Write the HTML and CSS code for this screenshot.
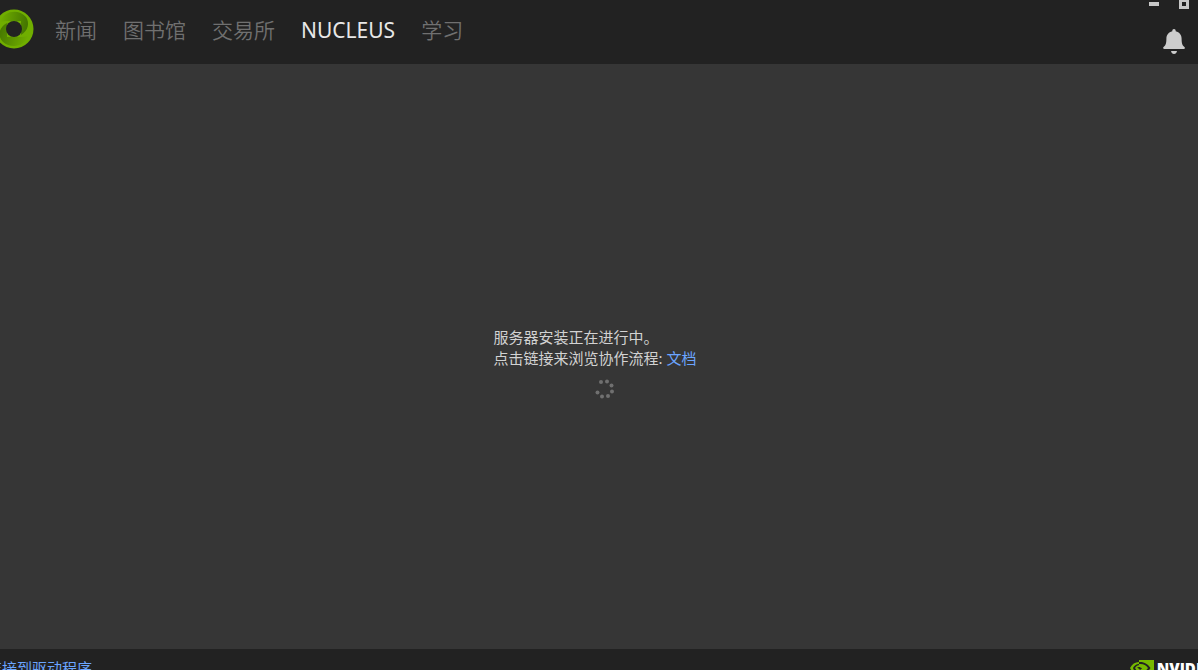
FILE: index.html
```html
<!DOCTYPE html>
<html lang="zh-CN">
<head>
<meta charset="utf-8">
<title>NUCLEUS</title>
<link rel="stylesheet" href="styles.css">
</head>
<body>
<header class="topbar">
  <svg class="logo" viewBox="0 0 40 40" aria-hidden="true">
    <defs>
      <linearGradient id="shadeTop" x1="0" y1="0.4" x2="1" y2="0.5">
        <stop offset="0" stop-color="#70ae00"/>
        <stop offset="1" stop-color="#437400"/>
      </linearGradient>
      <linearGradient id="shadeBottom" x1="1" y1="0.7" x2="0" y2="0.4">
        <stop offset="0" stop-color="#70ae00"/>
        <stop offset="1" stop-color="#477900"/>
      </linearGradient>
    </defs>
    <circle cx="20" cy="20" r="19.5" fill="#70ae00"/>
    <path d="M6 13C10 1 25 0 32 8C36 14 34 22 27 26V12H12Z" fill="url(#shadeTop)"/>
    <path d="M34 27C30 39 16 39 9 33C3 27 5 18 13 14V28H28Z" fill="url(#shadeBottom)"/>
    <circle cx="20" cy="20" r="8" fill="#222"/>
  </svg>
  <nav class="nav">
    <a class="nav-link" href="#">新闻</a>
    <a class="nav-link" href="#">图书馆</a>
    <a class="nav-link" href="#">交易所</a>
    <a class="nav-link active" href="#" aria-current="page">NUCLEUS</a>
    <a class="nav-link" href="#">学习</a>
  </nav>
  <div class="tools">
    <div class="window-buttons">
      <button class="window-button" type="button" aria-label="最小化"><svg viewBox="0 0 10 10"><path d="M0 2H10V6H0Z"/></svg></button>
      <button class="window-button" type="button" aria-label="最大化"><svg viewBox="0 0 10 10"><path fill-rule="evenodd" d="M0 0H10V9H0ZM3 2H7V6H3Z"/></svg></button>
    </div>
    <button class="bell" type="button" aria-label="通知"><svg viewBox="0 0 22 25"><path d="M11 0C12.200 0 12.800 .9 12.700 2.200C16.500 3 18.600 6 18.600 9.500C18.600 14.500 19.400 16.300 21.400 18C22.300 19 22 20 20.800 20H1.200C0 20-.3 19 .6 18C2.600 16.300 3.400 14.500 3.400 9.500C3.400 6 5.500 3 9.300 2.200C9.200.9 9.800 0 11 0Z"/><path d="M8 22H14C13.700 24 12.500 25 11 25S8.300 24 8 22Z"/></svg></button>
  </div>
</header>
<main class="content">
  <div class="message">
    <p>服务器安装正在进行中。</p>
    <p>点击链接来浏览协作流程: <a class="link" href="#">文档</a></p>
    <div class="progress">
      <svg class="spinner" viewBox="0 0 20 20" role="img" aria-label="加载中">
        <circle cx="6" cy="3" r="2"/><circle cx="12" cy="2.500" r="2"/><circle cx="16.500" cy="6.500" r="2"/><circle cx="17" cy="12.500" r="2"/><circle cx="13" cy="17" r="2"/><circle cx="7" cy="17.500" r="2"/><circle cx="2.500" cy="13.500" r="2"/>
      </svg>
    </div>
  </div>
</main>
<footer class="footer">
  <a class="link driver" href="#">连接到驱动程序</a>
  <div class="brand">
    <svg class="eye" viewBox="0 0 24 16" aria-hidden="true">
      <path d="M9 0H24V16H9Z" fill="#76b900"/>
      <path d="M0 8C2 4 5 2 9 2V4C6 4 4 6 3 8C4 11 6 13 9 14V16C5 15 2 12 0 8Z" fill="#76b900"/>
      <path d="M9 2C14 1.500 18 4 20.500 8C18 12 14 15 9 15V13C13 13 16 11 18 8C16 5 13 3.500 9 4Z" fill="#222"/>
      <path d="M5 8C6 6 8 5 10 5C13 5 15 7 16 8C14 11 12 12 9 12C7 11 6 10 5 8Z" fill="#76b900"/>
      <path d="M7 8C8 6.500 10 6.500 12 8.500L10 10C9 8.500 8 8 7 8Z" fill="#222"/>
    </svg>
    <span>NVIDIA</span>
  </div>
</footer>
</body>
</html>
```
FILE: styles.css
```css
* { box-sizing: border-box; }
body {
  margin: 0;
  height: 100vh;
  overflow: hidden;
  display: flex;
  flex-direction: column;
  background: #363636;
  color: #d2d2d2;
  font: 15px/21px "Noto Sans", "Noto Sans CJK SC", sans-serif;
}
p { margin: 0; }
a { text-decoration: none; }
button { border: 0; padding: 0; background: none; color: inherit; }
svg { display: block; }
.topbar {
  flex: none;
  height: 64px;
  display: flex;
  align-items: flex-start;
  background: #222;
  overflow: hidden;
}
.logo { flex: none; width: 40px; height: 40px; margin: 9px 0 0 -6px; }
.nav {
  display: flex;
  gap: 26px;
  margin-left: 21px;
  padding-top: 14px;
  font-size: 21px;
  font-weight: 350;
  line-height: 32px;
}
.nav-link { color: #707070; white-space: nowrap; }
.nav-link.active { color: #e8e8e8; font-weight: 400; }
.tools {
  margin-left: auto;
  display: flex;
  flex-direction: column;
  align-items: flex-end;
  gap: 19px;
}
.window-buttons { display: flex; gap: 20px; padding-right: 9px; }
.window-button { width: 10px; height: 10px; fill: #c8c8c8; }
.bell { width: 22px; height: 25px; margin-right: 13px; fill: #ccc; }
.content {
  flex: 1;
  display: flex;
  align-items: center;
  justify-content: center;
}
.message { padding: 12px 8px 0 0; }
.link { color: #6ba5ff; }
.progress { display: flex; justify-content: center; padding: 10px 0 0 20px; }
.spinner { width: 20px; height: 20px; fill: #707070; }
.footer {
  flex: none;
  height: 21px;
  display: flex;
  justify-content: space-between;
  align-items: flex-start;
  background: #222;
  overflow: hidden;
}
.driver { margin: 9px 0 0 -13px; white-space: nowrap; }
.brand {
  display: flex;
  gap: 3px;
  margin: 11px -14px 0 0;
  color: #fff;
  font: 800 15px/16px "Open Sans", sans-serif;
}
.eye { width: 24px; height: 16px; }
```
